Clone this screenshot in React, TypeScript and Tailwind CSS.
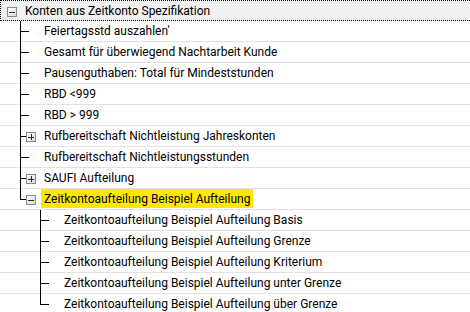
type Row = {
  label: string;
  level: number;
  box?: 'plus' | 'minus';
  last?: boolean;
  focus?: boolean;
  highlight?: boolean;
};

const rows: Row[] = [
  { label: 'Konten aus Zeitkonto Spezifikation', level: 0, box: 'minus', focus: true },
  { label: "Feiertagsstd auszahlen'", level: 1 },
  { label: 'Gesamt für überwiegend Nachtarbeit Kunde', level: 1 },
  { label: 'Pausenguthaben: Total für Mindeststunden', level: 1 },
  { label: 'RBD <999', level: 1 },
  { label: 'RBD > 999', level: 1 },
  { label: 'Rufbereitschaft Nichtleistung Jahreskonten', level: 1, box: 'plus' },
  { label: 'Rufbereitschaft Nichtleistungsstunden', level: 1 },
  { label: 'SAUFI Aufteilung', level: 1, box: 'plus' },
  { label: 'Zeitkontoaufteilung Beispiel Aufteilung', level: 1, box: 'minus', last: true, highlight: true },
  { label: 'Zeitkontoaufteilung Beispiel Aufteilung Basis', level: 2 },
  { label: 'Zeitkontoaufteilung Beispiel Aufteilung Grenze', level: 2 },
  { label: 'Zeitkontoaufteilung Beispiel Aufteilung Kriterium', level: 2 },
  { label: 'Zeitkontoaufteilung Beispiel Aufteilung unter Grenze', level: 2 },
  { label: 'Zeitkontoaufteilung Beispiel Aufteilung über Grenze', level: 2, last: true },
];

// connector lines + expand box drawn in the indent area of each row
function Guides({ row }: { row: Row }) {
  const L = row.level * 20;
  const w = L + 24;
  const cy = 10.5;
  return (
    <svg width={w} height={21} className="shrink-0 block" shapeRendering="crispEdges">
      <defs>
        <linearGradient id="boxfill" x1="0" y1="0" x2="1" y2="1">
          <stop offset="0" stopColor="#ffffff" />
          <stop offset="1" stopColor="#d6d6d6" />
        </linearGradient>
      </defs>
      {row.level > 0 && (
        <>
          <line x1={L + 0.5} y1={0} x2={L + 0.5} y2={row.last ? cy + 0.5 : 21} stroke="#000" />
          <line x1={L} y1={cy} x2={row.box ? L + 6 : L + 9} y2={cy} stroke="#000" />
        </>
      )}
      {row.box && (
        <g>
          <rect x={L + 6.5} y={6.5} width={9} height={9} fill="url(#boxfill)" stroke="#8c8c8c" />
          <line x1={L + 8} y1={11} x2={L + 14} y2={11} stroke="#1b2a44" />
          {row.box === 'plus' && (
            <line x1={L + 11} y1={8} x2={L + 11} y2={14} stroke="#1b2a44" />
          )}
        </g>
      )}
    </svg>
  );
}

export default function App() {
  return (
    <div className="w-[470px] h-[312px] overflow-hidden bg-white text-black text-[12px] font-['Roboto',sans-serif]">
      {rows.map((row, i) => (
        <div
          key={i}
          className={`flex items-start h-[21px] ${
            row.focus
              ? 'bg-[#f0f0f0] border-y border-l border-dotted border-black'
              : 'border-b border-[#e2e2e2]'
          }`}
        >
          <Guides row={row} />
          <span
            className={`whitespace-nowrap leading-[20px] ${
              row.highlight ? 'bg-[#ffe800] -ml-[3px] px-[3px] h-[19px] leading-[19px]' : ''
            }`}
          >
            {row.label}
          </span>
        </div>
      ))}
    </div>
  );
}
